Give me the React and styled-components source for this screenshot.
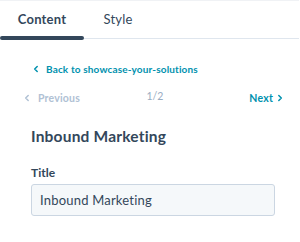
import React from 'react';
import styled, { createGlobalStyle } from 'styled-components';

const GlobalStyle = createGlobalStyle`
  html, body {
    margin: 0;
    padding: 0;
    background: #fff;
  }
  body {
    font-family: 'Lato', 'Open Sans', sans-serif;
    color: #33475b;
  }
  * { box-sizing: border-box; }
`;

const Panel = styled.div`
  width: 299px;
  height: 242px;
  border-top: 1px solid #f0f2f5;
  background: #fff;
`;

const Tabs = styled.div`
  display: flex;
  height: 38px;
  border-bottom: 1px solid #dfe6ee;
`;

const Tab = styled.div`
  position: relative;
  width: ${p => p.$w}px;
  display: flex;
  justify-content: center;
  padding-top: 10px;
  font-size: 13px;
  font-weight: ${p => (p.$active ? 700 : 400)};
  color: #33475b;
  letter-spacing: 0.2px;

  &::after {
    content: '';
    display: ${p => (p.$active ? 'block' : 'none')};
    position: absolute;
    left: 0;
    right: 0;
    bottom: -2px;
    height: 4px;
    border-radius: 2px;
    background: #33475b;
  }
`;

const Body = styled.div`
  padding: 24px 24px 0 24px;
`;

const BackLink = styled.a`
  display: flex;
  align-items: center;
  gap: 6px;
  padding-left: 8px;
  font-size: 10px;
  font-weight: 700;
  color: #0091ae;
  text-decoration: none;
  letter-spacing: 0.15px;
`;

const Pager = styled.div`
  display: grid;
  grid-template-columns: 1fr auto 1fr;
  align-items: start;
  margin-top: 15px;
  margin-left: -1px;
  margin-right: -9px;
  height: 28px;
`;

const PageBtn = styled.span`
  display: flex;
  align-items: center;
  justify-content: ${p => (p.$end ? 'flex-end' : 'flex-start')};
  gap: ${p => (p.$end ? 3 : 7)}px;
  margin-top: 2px;
  font-size: 10.5px;
  font-weight: 700;
  letter-spacing: 0.2px;
  color: ${p => (p.$disabled ? '#b0c1d4' : '#0091ae')};
`;

const Count = styled.span`
  font-size: 10.5px;
  color: #99acc2;
  margin-left: 3px;
`;

const Heading = styled.h2`
  margin: 9px 0 0 7px;
  font-size: 15.5px;
  font-weight: 700;
  color: #33475b;
  letter-spacing: 0.2px;
`;

const Field = styled.div`
  margin: 20px 0 0 7px;
  display: flex;
  flex-direction: column;
  gap: 4px;
`;

const Label = styled.label`
  font-size: 12px;
  font-weight: 700;
  color: #33475b;
`;

const Input = styled.div`
  width: 244px;
  height: 32px;
  display: flex;
  align-items: center;
  padding-left: 8px;
  background: #f5f8fa;
  border: 1px solid #cbd6e2;
  border-radius: 3px;
  font-size: 13px;
  color: #33475b;
  letter-spacing: 0.2px;
`;

const Chevron = ({ dir = 'left', color, size = 8 }) => (
  <svg width={size} height={size} viewBox="0 0 8 8" fill="none">
    <path
      d={dir === 'left' ? 'M5.2 1.5 2.7 4l2.5 2.5' : 'M2.8 1.5 5.3 4 2.8 6.5'}
      stroke={color}
      strokeWidth="1.5"
      strokeLinecap="round"
      strokeLinejoin="round"
    />
  </svg>
);

export default function App() {
  return (
    <>
      <GlobalStyle />
      <Panel>
        <Tabs>
          <Tab $w={84} $active>Content</Tab>
          <Tab $w={68}>Style</Tab>
        </Tabs>
        <Body>
          <BackLink href="#">
            <Chevron color="#0091ae" />
            Back to showcase-your-solutions
          </BackLink>
          <Pager>
            <PageBtn $disabled>
              <Chevron color="#b0c1d4" />
              Previous
            </PageBtn>
            <Count>1/2</Count>
            <PageBtn $end>
              Next
              <Chevron dir="right" color="#0091ae" />
            </PageBtn>
          </Pager>
          <Heading>Inbound Marketing</Heading>
          <Field>
            <Label>Title</Label>
            <Input>Inbound Marketing</Input>
          </Field>
        </Body>
      </Panel>
    </>
  );
}
